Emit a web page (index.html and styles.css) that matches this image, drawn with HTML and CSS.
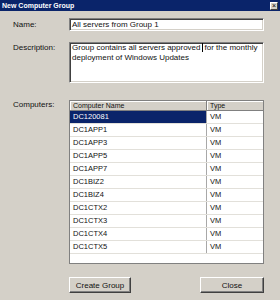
FILE: index.html
```html
<!DOCTYPE html>
<html lang="en">
<head>
    <meta charset="UTF-8">
    <meta name="viewport" content="width=device-width, initial-scale=1.0">
    <title>New Computer Group</title>
    <link rel="stylesheet" href="styles.css">
</head>
<body>

    <div class="dialog">

        <div class="titlebar">
            <span class="title">New Computer Group</span>
            <span class="close-btn">&times;</span>
        </div>

        <div class="content">

            <div class="row row-name">
                <label class="label" for="name">Name:</label>
                <div class="field input" id="name">All servers from Group 1</div>
            </div>

            <div class="row row-desc">
                <label class="label" for="desc">Description:</label>
                <div class="field textarea" id="desc">Group contains all servers approved<span class="caret"></span>for the monthly<br>deployment of Windows Updates</div>
            </div>

            <div class="row row-list">
                <label class="label">Computers:</label>
                <div class="field listview">
                    <table>
                        <tr><th class="c-name">Computer Name</th><th class="c-type">Type</th></tr>
                        <tr class="selected"><td class="c-name">DC120081</td><td class="c-type">VM</td></tr>
                        <tr><td class="c-name">DC1APP1</td><td class="c-type">VM</td></tr>
                        <tr><td class="c-name">DC1APP3</td><td class="c-type">VM</td></tr>
                        <tr><td class="c-name">DC1APP5</td><td class="c-type">VM</td></tr>
                        <tr><td class="c-name">DC1APP7</td><td class="c-type">VM</td></tr>
                        <tr><td class="c-name">DC1BIZ2</td><td class="c-type">VM</td></tr>
                        <tr><td class="c-name">DC1BIZ4</td><td class="c-type">VM</td></tr>
                        <tr><td class="c-name">DC1CTX2</td><td class="c-type">VM</td></tr>
                        <tr><td class="c-name">DC1CTX3</td><td class="c-type">VM</td></tr>
                        <tr><td class="c-name">DC1CTX4</td><td class="c-type">VM</td></tr>
                        <tr><td class="c-name">DC1CTX5</td><td class="c-type">VM</td></tr>
                    </table>
                </div>
            </div>

            <div class="buttons">
                <button class="btn btn-create">Create Group</button>
                <button class="btn btn-close">Close</button>
            </div>

        </div>

    </div>

</body>
</html>
```

FILE: styles.css
```css
body {
    margin: 0;
}

.dialog {
    width: 280px;
    height: 300px;
    background-color: #d4d0c8;
    font-family: "Liberation Sans", Arial, sans-serif;
    font-size: 8px;
    color: #111111;
    overflow: hidden;
}

.titlebar {
    height: 11px;
    display: flex;
    align-items: center;
    justify-content: space-between;
    padding: 0 2px;
    background-color: #0a246a;
}

.title {
    color: #ffffff;
    font-weight: bold;
    font-size: 7px;
}

.close-btn {
    width: 6px;
    height: 6px;
    display: flex;
    align-items: center;
    justify-content: center;
    background-color: #d4d0c8;
    border: 1px solid;
    border-color: #ffffff #404040 #404040 #ffffff;
    font-size: 7px;
    line-height: 6px;
    color: #000000;
}

.content {
    padding: 7px 16px 0 13px;
}

.row {
    display: flex;
}

.label {
    width: 56px;
    flex: none;
}

.field {
    box-sizing: border-box;
    width: 195px;
    background-color: #ffffff;
    border: 1px solid;
    border-color: #808080 #ffffff #ffffff #808080;
    box-shadow: inset 1px 1px #404040, inset -1px -1px #d4d0c8;
}

.row-name .label {
    line-height: 13px;
}

.input {
    height: 13px;
    line-height: 11px;
    padding-left: 2px;
}

.row-desc {
    margin-top: 11px;
}

.row-desc .label {
    line-height: 11px;
}

.textarea {
    height: 41px;
    padding: 0 2px;
    line-height: 9.5px;
}

.caret {
    display: inline-block;
    width: 0;
    height: 9px;
    margin: 0 2px 0 1px;
    border-left: 1px solid #000000;
    vertical-align: -2px;
}

.row-list {
    margin-top: 17px;
}

.row-list .label {
    line-height: 10px;
}

.listview {
    height: 164px;
    box-shadow: none;
    border-color: #808080;
}

.listview table {
    width: 100%;
    border-collapse: collapse;
    table-layout: fixed;
}

.listview th {
    height: 9px;
    padding: 0 3px;
    background-color: #d4d0c8;
    font-weight: normal;
    font-size: 7px;
    line-height: 8px;
    text-align: left;
    border-right: 1px solid #808080;
    border-bottom: 1px solid #808080;
    box-shadow: inset 1px 1px #ffffff;
}

.listview th.c-type {
    border-right: none;
}

.listview .c-name {
    width: 130px;
}

.listview td {
    height: 12px;
    padding: 0 3px;
    font-size: 7.5px;
    line-height: 10px;
    border-bottom: 1px solid #e2e0da;
}

.listview td.c-name {
    border-right: 1px solid #a8a8a8;
}

.listview tr.selected td.c-name {
    background-color: #0a246a;
    color: #ffffff;
}

.buttons {
    display: flex;
    justify-content: space-between;
    width: 195px;
    margin: 13px 0 0 56px;
}

.btn {
    height: 16px;
    padding: 0;
    background-color: #d4d0c8;
    border: 1px solid;
    border-color: #ffffff #404040 #404040 #ffffff;
    box-shadow: inset -1px -1px #808080;
    font-family: "Liberation Sans", Arial, sans-serif;
    font-size: 8px;
    color: #111111;
}

.btn-create {
    width: 62px;
}

.btn-close {
    width: 64px;
}
```
